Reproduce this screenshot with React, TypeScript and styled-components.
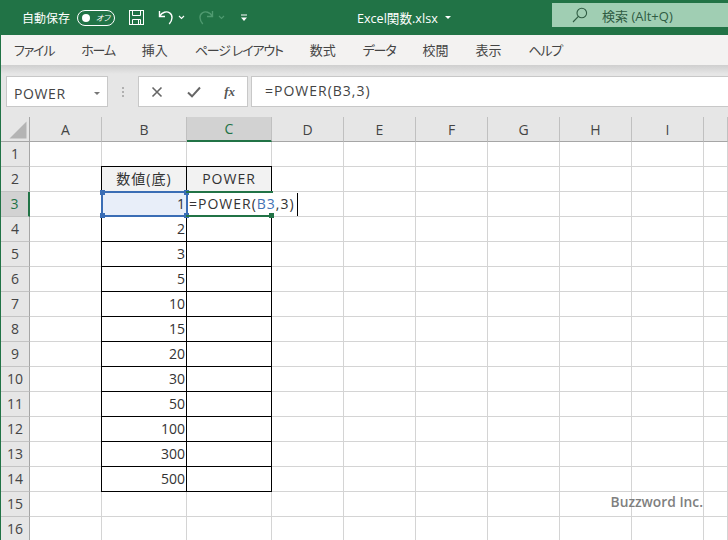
import React from "react";
import styled, { createGlobalStyle } from "styled-components";

const COLUMNS = ["A", "B", "C", "D", "E", "F", "G", "H", "I"];
const VALUES = [1, 2, 3, 5, 10, 15, 20, 30, 50, 100, 300, 500];
const MENU = [
  { label: "ファイル", kana: true },
  { label: "ホーム", kana: true },
  { label: "挿入", kana: false },
  { label: "ページ レイアウト", kana: true },
  { label: "数式", kana: false },
  { label: "データ", kana: true },
  { label: "校閲", kana: false },
  { label: "表示", kana: false },
  { label: "ヘルプ", kana: true },
];
const ROWS = Array.from({ length: 16 }, (_, i) => i + 1);

const GlobalStyle = createGlobalStyle`
  html, body {
    margin: 0;
    padding: 0;
    background: #fff;
    overflow: hidden;
  }
  body {
    font-family: "Open Sans", "Noto Sans CJK JP", sans-serif;
    font-feature-settings: "palt";
  }
`;

const Page = styled.div`
  width: 728px;
  height: 540px;
  overflow: hidden;
  display: flex;
  flex-direction: column;
`;

const TitleBar = styled.div`
  height: 35px;
  flex: none;
  background: #217346;
  color: #fff;
  display: flex;
  align-items: center;
  font-size: 12px;
`;

const AutoSave = styled.span`
  margin-left: 22px;
  width: 48px;
  white-space: nowrap;
`;

const Toggle = styled.div`
  margin-left: 7px;
  width: 28px;
  height: 14px;
  border: 1px solid #fff;
  border-radius: 9px;
  display: flex;
  align-items: center;
  justify-content: space-between;
  padding: 0 4px;
`;

const ToggleDot = styled.i`
  width: 8px;
  height: 8px;
  border-radius: 50%;
  background: #fff;
`;

const ToggleLabel = styled.span`
  font-size: 8px;
  font-style: italic;
`;

const QuickIcons = styled.div`
  margin-left: 13px;
  width: 122px;
  display: flex;
  align-items: center;
  flex: none;
`;

const IconGap = styled.span<{ $w: number }>`
  width: ${(p) => p.$w}px;
  flex: none;
`;

const FileName = styled.span`
  margin-left: 107px;
  width: 195px;
  font-size: 12.6px;
  white-space: nowrap;
  display: flex;
  align-items: center;
  gap: 7px;
`;

const Caret = styled.i<{ $color?: string }>`
  width: 0;
  height: 0;
  border-left: 3px solid transparent;
  border-right: 3px solid transparent;
  border-top: 3px solid ${(p) => p.$color || "#fff"};
`;

const SearchBox = styled.div`
  width: 176px;
  height: 24px;
  margin-bottom: 5px;
  background: #a0ceb3;
  color: #2f5c43;
  display: flex;
  align-items: center;
  font-size: 13px;
  padding-left: 20px;
  box-sizing: border-box;
  gap: 14px;
  white-space: nowrap;
`;

const Body = styled.div`
  flex: 1;
  display: flex;
  flex-direction: column;
  border-left: 1px solid #217346;
  min-height: 0;
`;

const MenuBar = styled.div`
  height: 30px;
  flex: none;
  box-sizing: border-box;
  padding: 0 0 2px 13px;
  background: #f3f2f1;
  display: flex;
  align-items: center;
  gap: 27px;
  font-size: 13px;
  color: #444;
`;

const MenuItem = styled.span<{ $kana: boolean }>`
  white-space: nowrap;
  letter-spacing: ${(p) => (p.$kana ? "-1.2px" : "0")};
`;

const FormulaArea = styled.div`
  height: 52px;
  flex: none;
  box-sizing: border-box;
  background: linear-gradient(#cfcfcf 0, #e6e6e6 9px);
  padding: 11px 0 10px 5px;
  display: flex;
  align-items: stretch;
`;

const FieldBox = styled.div`
  background: #fff;
  border: 1px solid #c8c8c8;
  box-sizing: border-box;
  display: flex;
  align-items: center;
`;

const NameBox = styled(FieldBox)`
  width: 102px;
  justify-content: space-between;
  padding: 4px 7px 0 7px;
  font-size: 14px;
  color: #444;
  letter-spacing: 0.6px;
`;

const Grip = styled.div`
  width: 30px;
  display: flex;
  flex-direction: column;
  align-items: center;
  justify-content: center;
  gap: 2px;
`;

const GripDot = styled.i`
  width: 2px;
  height: 2px;
  background: #b0b0b0;
`;

const ActionBox = styled(FieldBox)`
  width: 110px;
  justify-content: space-between;
  padding: 0 12px 0 12px;
`;

const FxLabel = styled.span`
  font-family: "Liberation Serif", serif;
  font-style: italic;
  font-weight: 700;
  font-size: 13px;
  color: #555;
`;

const FormulaInput = styled(FieldBox)`
  flex: 1;
  margin-left: 3px;
  margin-right: -1px;
  padding: 0 0 2px 13px;
  font-size: 14px;
  color: #444;
  letter-spacing: 1px;
`;

const Sheet = styled.div`
  flex: 1;
  display: grid;
  grid-template-columns: 29px 72px 85px 85px repeat(6, 72px) 24px;
  grid-auto-rows: 25px;
  font-size: 14px;
  color: #333;
  position: relative;
  overflow: hidden;
  min-height: 0;
`;

const HeaderCell = styled.div<{ $active?: boolean }>`
  box-sizing: border-box;
  background: ${(p) => (p.$active ? "#d2d2d2" : "#e6e6e6")};
  color: ${(p) => (p.$active ? "#217346" : "#444")};
  border-right: 1px solid #c0c0c0;
  border-bottom: ${(p) => (p.$active ? "2px solid #217346" : "1px solid #a6a6a6")};
  display: flex;
  align-items: center;
  justify-content: center;
  overflow: hidden;
  white-space: nowrap;
`;

const Corner = styled(HeaderCell)`
  border-right: 1px solid #a6a6a6;
  padding: 3px 2px 2px 8px;
`;

const RowHead = styled.div<{ $active?: boolean }>`
  box-sizing: border-box;
  padding-bottom: 2px;
  background: ${(p) => (p.$active ? "#d2d2d2" : "#e6e6e6")};
  color: ${(p) => (p.$active ? "#217346" : "#444")};
  border-right: ${(p) => (p.$active ? "2px solid #217346" : "1px solid #a6a6a6")};
  border-bottom: 1px solid #c4c4c4;
  display: flex;
  align-items: center;
  justify-content: center;
`;

const Cell = styled.div<{ $boxed?: boolean; $fill?: string; $right?: boolean; $label?: boolean }>`
  box-sizing: border-box;
  border-right: 1px solid ${(p) => (p.$boxed ? "#000" : "#d4d4d4")};
  border-bottom: 1px solid ${(p) => (p.$boxed ? "#000" : "#d4d4d4")};
  background: ${(p) => p.$fill || "transparent"};
  box-shadow: ${(p) => (p.$boxed ? "-1px -1px 0 #000, -1px 0 0 #000, 0 -1px 0 #000" : "none")};
  position: ${(p) => (p.$boxed ? "relative" : "static")};
  display: flex;
  align-items: center;
  justify-content: ${(p) => (p.$right ? "flex-end" : "center")};
  padding: 0 ${(p) => (p.$right ? "1px" : "0")} 2px 0;
  letter-spacing: ${(p) => (p.$label ? "1px" : "0")};
  white-space: nowrap;
`;

const Frame = styled.div<{ $color: string; $width: number }>`
  position: absolute;
  top: -1px;
  left: -1px;
  height: 26px;
  width: ${(p) => p.$width}px;
  box-sizing: border-box;
  border-top: 2px solid ${(p) => p.$color};
  border-bottom: 2px solid ${(p) => p.$color};
  z-index: 3;
`;

const BlueFrame = styled(Frame)`
  border-left: 2px solid ${(p) => p.$color};
  border-right: 2px solid ${(p) => p.$color};
`;

const Handle = styled.i<{ $color: string; $x: "l" | "r"; $y: "t" | "b"; $inset?: number }>`
  position: absolute;
  width: 5px;
  height: 5px;
  background: ${(p) => p.$color};
  ${(p) => (p.$x === "l" ? "left: -3px;" : `right: ${p.$inset ?? -3}px;`)}
  ${(p) => (p.$y === "t" ? "top: -3px;" : "bottom: -3px;")}
`;

const Editor = styled.div`
  position: absolute;
  top: 1px;
  left: 1px;
  height: 23px;
  width: 110px;
  background: #fff;
  border-right: 1px solid #000;
  box-sizing: border-box;
  display: flex;
  align-items: center;
  padding: 0 0 2px 1px;
  color: #333;
  letter-spacing: 1px;
  z-index: 2;
  white-space: nowrap;
`;

const RangeRef = styled.span`
  color: #4472b4;
`;

const Watermark = styled.div`
  position: absolute;
  right: 25px;
  bottom: 29px;
  font-size: 13.8px;
  font-weight: 600;
  color: #7f7f7f;
  z-index: 5;
`;

const Mirror = styled.span`
  display: flex;
  transform: scaleX(-1);
`;

function SaveIcon() {
  return (
    <svg width="17" height="17" viewBox="0 0 17 17" fill="none" stroke="#fff" strokeWidth="1">
      <rect x="1.5" y="1.5" width="14" height="14" />
      <path d="M4.5 1.5v5h8v-5M4.5 15.5v-5h8v5M10.5 10.5v5" />
    </svg>
  );
}

function UndoIcon({ color }: { color: string }) {
  return (
    <svg width="18" height="18" viewBox="0 0 18 18" fill="none" stroke={color} strokeWidth="1.4">
      <path d="M2.5 2v5.5H8M2.8 7.2C5 3.2 9.5 1.8 12.6 3.8c3.3 2.2 3.2 7-.4 11.2" />
    </svg>
  );
}

function ChevronSmall({ color }: { color: string }) {
  return (
    <svg width="7" height="5" viewBox="0 0 7 5" fill="none" stroke={color} strokeWidth="1.1">
      <path d="M1 1l2.5 2.5L6 1" />
    </svg>
  );
}

function CustomizeIcon() {
  return (
    <svg width="8" height="8" viewBox="0 0 8 8" fill="#fff">
      <rect x="1" y="0.5" width="6" height="1" />
      <path d="M1 3.5h6L4 7z" />
    </svg>
  );
}

function SearchIcon() {
  return (
    <svg width="16" height="16" viewBox="0 0 16 16" fill="none" stroke="#2f5c43" strokeWidth="1.1">
      <circle cx="9.8" cy="6" r="4.8" />
      <path d="M6.4 9.4L1 15" />
    </svg>
  );
}

function CancelIcon() {
  return (
    <svg width="12" height="12" viewBox="0 0 12 12" fill="none" stroke="#666" strokeWidth="1.6">
      <path d="M1.5 1.5l9 9M10.5 1.5l-9 9" />
    </svg>
  );
}

function CheckIcon() {
  return (
    <svg width="14" height="12" viewBox="0 0 14 12" fill="none" stroke="#666" strokeWidth="2">
      <path d="M1 6.5l4 3.8L13 1.5" />
    </svg>
  );
}

function CornerTriangle() {
  return (
    <svg width="18" height="18" viewBox="0 0 18 18" fill="#b4b4b4">
      <path d="M17.5 0.5V17.5H0.5z" />
    </svg>
  );
}

function DataCell({ row, col }: { row: number; col: string }) {
  if (col === "B" && row === 2) return <Cell $boxed $label $fill="#f2f2f2">数値(底)</Cell>;
  if (col === "C" && row === 2) return <Cell $boxed $label $fill="#f2f2f2">POWER</Cell>;
  if (col === "B" && row === 3) {
    return (
      <Cell $boxed $right $fill="#e8eef9">
        1
        <BlueFrame $color="#3a6db5" $width={87}>
          <Handle $color="#3a6db5" $x="l" $y="t" />
          <Handle $color="#3a6db5" $x="r" $y="t" />
          <Handle $color="#3a6db5" $x="l" $y="b" />
          <Handle $color="#3a6db5" $x="r" $y="b" />
        </BlueFrame>
      </Cell>
    );
  }
  if (col === "C" && row === 3) {
    return (
      <Cell $boxed>
        <Editor>
          =POWER(<RangeRef>B3</RangeRef>,3)
        </Editor>
        <Frame $color="#217346" $width={87}>
          <Handle $color="#217346" $x="r" $y="b" $inset={-1} />
        </Frame>
      </Cell>
    );
  }
  if (col === "B" && row >= 4 && row <= 14) {
    return <Cell $boxed $right>{VALUES[row - 3]}</Cell>;
  }
  if (col === "C" && row >= 4 && row <= 14) return <Cell $boxed />;
  return <Cell />;
}

function App() {
  return (
    <Page>
      <GlobalStyle />
      <TitleBar>
        <AutoSave>自動保存</AutoSave>
        <Toggle>
          <ToggleDot />
          <ToggleLabel>オフ</ToggleLabel>
        </Toggle>
        <QuickIcons>
          <SaveIcon />
          <IconGap $w={12} />
          <UndoIcon color="#fff" />
          <IconGap $w={3} />
          <ChevronSmall color="#fff" />
          <IconGap $w={12} />
          <Mirror>
            <UndoIcon color="#4f9a70" />
          </Mirror>
          <IconGap $w={3} />
          <ChevronSmall color="#4f9a70" />
          <IconGap $w={15} />
          <CustomizeIcon />
        </QuickIcons>
        <FileName>
          Excel関数.xlsx <Caret />
        </FileName>
        <SearchBox>
          <SearchIcon />
          検索 (Alt+Q)
        </SearchBox>
      </TitleBar>
      <Body>
        <MenuBar>
          {MENU.map((m) => (
            <MenuItem key={m.label} $kana={m.kana}>
              {m.label}
            </MenuItem>
          ))}
        </MenuBar>
        <FormulaArea>
          <NameBox>
            POWER
            <Caret $color="#777" />
          </NameBox>
          <Grip>
            <GripDot />
            <GripDot />
            <GripDot />
          </Grip>
          <ActionBox>
            <CancelIcon />
            <CheckIcon />
            <FxLabel>fx</FxLabel>
          </ActionBox>
          <FormulaInput>=POWER(B3,3)</FormulaInput>
        </FormulaArea>
        <Sheet>
          <Corner>
            <CornerTriangle />
          </Corner>
          {COLUMNS.map((c) => (
            <HeaderCell key={c} $active={c === "C"}>
              {c}
            </HeaderCell>
          ))}
          <HeaderCell />
          {ROWS.map((row) => (
            <React.Fragment key={row}>
              <RowHead $active={row === 3}>{row}</RowHead>
              {COLUMNS.map((col) => (
                <DataCell key={col} row={row} col={col} />
              ))}
              <Cell />
            </React.Fragment>
          ))}
          <Watermark>Buzzword Inc.</Watermark>
        </Sheet>
      </Body>
    </Page>
  );
}

export default App;
